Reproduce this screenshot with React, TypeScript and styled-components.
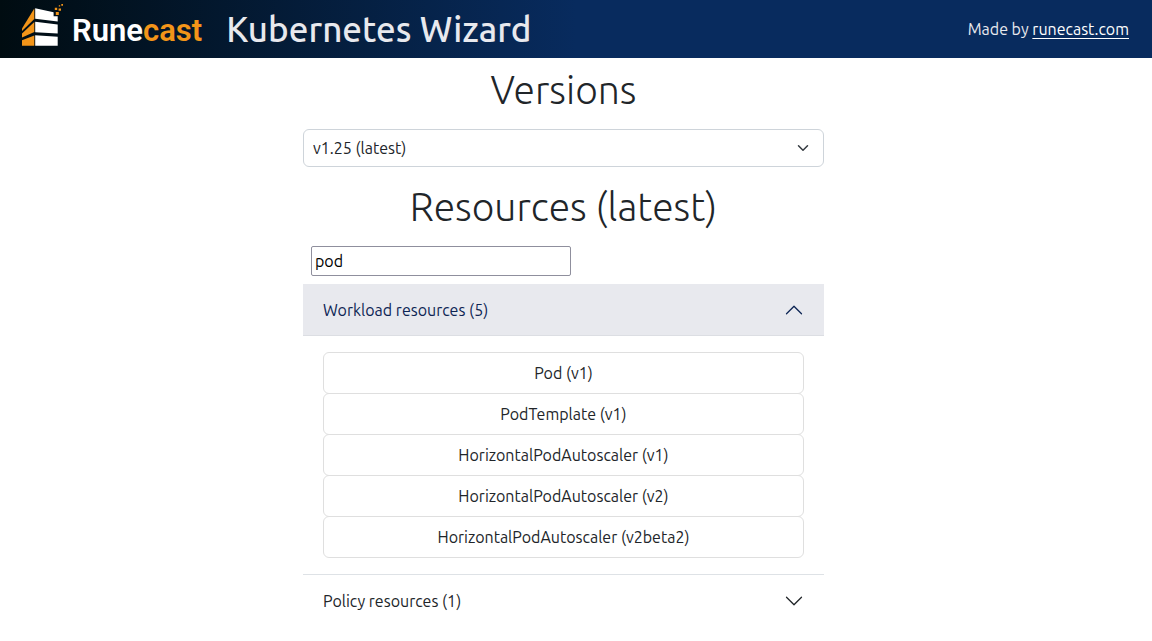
import React, { useState } from "react";
import styled, { createGlobalStyle } from "styled-components";

const GlobalStyle = createGlobalStyle`
  *, *::before, *::after { box-sizing: border-box; }
  body {
    margin: 0;
    background: #fff;
    color: #212529;
    font-family: Ubuntu, "Noto Sans", sans-serif;
    font-size: 16px;
    line-height: 24px;
  }
`;

const Header = styled.header`
  display: flex;
  align-items: center;
  justify-content: space-between;
  height: 58px;
  padding: 0 23px 0 20px;
  color: #e8e9ee;
  background: linear-gradient(90deg, #000c11 0%, #082b5e 50%);
`;

const Brand = styled.div`
  display: flex;
  align-items: center;
  gap: 24px;
`;

const LogoLink = styled.a`
  display: flex;
  align-items: center;
  gap: 7px;
  color: #fff;
  text-decoration: none;
`;

const LogoMark = styled.svg`
  display: block;
  width: 45px;
  height: 58px;
`;

const LogoText = styled.span`
  padding-top: 3px;
  font-family: Roboto, "Noto Sans", sans-serif;
  font-size: 31px;
  font-weight: 600;
  line-height: 36px;
`;

const LogoAccent = styled.span`
  color: #f39519;
`;

const AppTitle = styled.h1`
  margin: 0;
  font-size: 35px;
  font-weight: 500;
  line-height: 42px;
`;

const MadeBy = styled.p`
  margin: 0;
`;

const SiteLink = styled.a`
  color: #fff;
  text-decoration: underline;
  text-underline-offset: 3px;
`;

const Main = styled.main`
  padding: 8px 25px 16px 0;
`;

const Column = styled.div`
  width: 100%;
  max-width: 521px;
  margin: 0 auto;
`;

const Heading = styled.h2`
  margin: 0 0 15px;
  font-family: Ubuntu, "Open Sans", sans-serif;
  font-size: 39px;
  font-weight: 300;
  line-height: 48px;
  text-align: center;
`;

const SelectWrap = styled.div`
  display: grid;
  align-items: center;
  margin-bottom: 16px;

  > * { grid-area: 1 / 1; }
  > svg { justify-self: end; margin-right: 15px; pointer-events: none; }
`;

const Select = styled.select`
  appearance: none;
  width: 100%;
  height: 38px;
  padding: 0 36px 0 9px;
  border: 1px solid #ced4da;
  border-radius: 6px;
  background: #fff;
  color: #212529;
  font: inherit;
`;

const Search = styled.input`
  display: block;
  width: 260px;
  max-width: 100%;
  height: 30px;
  margin: 0 8px 8px;
  padding: 1px 3px;
  border: 1px solid #8f8f9d;
  border-radius: 2px;
  background: #fff;
  color: #000;
  font: inherit;
`;

const Group = styled.section`
  border-bottom: 1px solid #dee2e6;

  &:last-child { border-bottom: 0; }
`;

const GroupTitle = styled.h3`
  margin: 0;
  font: inherit;
`;

const GroupToggle = styled.button<{ $open: boolean }>`
  display: flex;
  align-items: center;
  justify-content: space-between;
  width: 100%;
  height: 52px;
  padding: 0 20px;
  border: 0;
  background: ${({ $open }) => ($open ? "#e8e9ee" : "#fff")};
  box-shadow: ${({ $open }) => ($open ? "inset 0 -1px 0 #dcdee3" : "none")};
  color: ${({ $open }) => ($open ? "#0d2554" : "#212529")};
  font: inherit;
  text-align: left;
  cursor: pointer;

  svg { transform: ${({ $open }) => ($open ? "rotate(180deg)" : "none")}; }
`;

const ResourceList = styled.div`
  display: flex;
  flex-direction: column;
  padding: 16px 20px;
`;

const ResourceButton = styled.button`
  height: 42px;
  padding: 0 16px;
  border: 1px solid #dfdfdf;
  border-radius: 6px;
  background: #fff;
  color: #212529;
  font: inherit;
  cursor: pointer;

  & + & { margin-top: -1px; }
`;

const SelectChevron = () => (
  <svg width="12" height="12" viewBox="0 0 16 16" fill="none" aria-hidden="true">
    <path
      d="M2 5l6 6 6-6"
      stroke="#343a40"
      strokeWidth="2"
      strokeLinecap="round"
      strokeLinejoin="round"
    />
  </svg>
);

const ToggleChevron = () => (
  <svg width="20" height="20" viewBox="0 0 16 16" fill="currentColor" aria-hidden="true">
    <path
      fillRule="evenodd"
      d="M1.646 4.646a.5.5 0 0 1 .708 0L8 10.293l5.646-5.647a.5.5 0 0 1 .708.708l-6 6a.5.5 0 0 1-.708 0l-6-6a.5.5 0 0 1 0-.708z"
    />
  </svg>
);

const Logo = () => (
  <LogoMark viewBox="20 0 45 58" aria-hidden="true">
    <g fill="#f39519">
      <path d="M34.3 8.6v10.4L22 31v-2.4z" />
      <path d="M34.3 22v10L22 37.6v-4z" />
      <path d="M34.3 35.4v10.4H22v-5.6z" />
      <path d="M54.8 7.7h2.4V10h-2.4zM58.6 8.4H61v2.4h-2.4zM55.8 12h3v3h-3zM61.3 4H63v1.7h-1.7zM58.8 5.2h1.4v1.2h-1.4z" />
    </g>
    <g fill="#fff">
      <path d="M35.2 8.3l18.4 4v4h4.1v5.2l-22.5-2.8z" />
      <path d="M35.2 21.8l22.5 2.8v9l-22.5-1.4z" />
      <path d="M35.2 35.2l22.5 1.6v9H35.2z" />
    </g>
  </LogoMark>
);

const groups = [
  {
    name: "Workload resources",
    items: [
      "Pod (v1)",
      "PodTemplate (v1)",
      "HorizontalPodAutoscaler (v1)",
      "HorizontalPodAutoscaler (v2)",
      "HorizontalPodAutoscaler (v2beta2)",
    ],
  },
  { name: "Policy resources", items: ["PodDisruptionBudget (v1)"] },
];

export default function App() {
  const [query, setQuery] = useState("pod");
  const [open, setOpen] = useState("Workload resources");

  return (
    <>
      <GlobalStyle />
      <Header>
        <Brand>
          <LogoLink href="#home">
            <Logo />
            <LogoText>
              Rune<LogoAccent>cast</LogoAccent>
            </LogoText>
          </LogoLink>
          <AppTitle>Kubernetes Wizard</AppTitle>
        </Brand>
        <MadeBy>
          Made by <SiteLink href="#runecast">runecast.com</SiteLink>
        </MadeBy>
      </Header>
      <Main>
        <Column>
          <Heading id="versions">Versions</Heading>
          <SelectWrap>
            <Select aria-labelledby="versions" defaultValue="1.25">
              <option value="1.25">v1.25 (latest)</option>
            </Select>
            <SelectChevron />
          </SelectWrap>
          <Heading id="resources">Resources (latest)</Heading>
          <Search
            type="text"
            aria-labelledby="resources"
            value={query}
            onChange={(event) => setQuery(event.target.value)}
          />
          {groups.map(({ name, items }) => {
            const shown = items.filter((item) =>
              item.toLowerCase().includes(query.toLowerCase())
            );
            const isOpen = open === name;
            return (
              <Group key={name}>
                <GroupTitle>
                  <GroupToggle
                    type="button"
                    $open={isOpen}
                    aria-expanded={isOpen}
                    onClick={() => setOpen(isOpen ? "" : name)}
                  >
                    {name} ({shown.length})
                    <ToggleChevron />
                  </GroupToggle>
                </GroupTitle>
                {isOpen && (
                  <ResourceList>
                    {shown.map((item) => (
                      <ResourceButton key={item} type="button">
                        {item}
                      </ResourceButton>
                    ))}
                  </ResourceList>
                )}
              </Group>
            );
          })}
        </Column>
      </Main>
    </>
  );
}
